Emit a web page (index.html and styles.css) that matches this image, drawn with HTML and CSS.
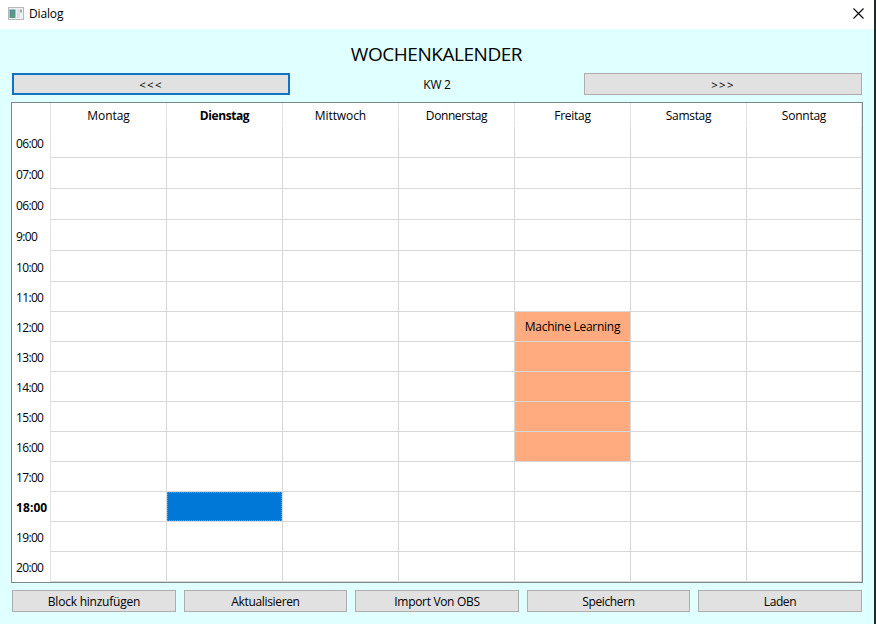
FILE: index.html
```html
<!DOCTYPE html>
<html lang="de">
<head>
<meta charset="utf-8">
<title>Dialog</title>
<link rel="stylesheet" href="styles.css">
</head>
<body>
<div class="window">
  <header class="titlebar">
    <svg class="app-icon" width="16" height="14" viewBox="0 0 16 14">
      <defs><linearGradient id="pane" x1="0" y1="0" x2="1" y2="1"><stop offset="0" stop-color="#4a8a9c"/><stop offset="1" stop-color="#62a47c"/></linearGradient></defs>
      <rect x="0.5" y="0.5" width="15" height="12" fill="#eef0f2" stroke="#b4b9bd"/>
      <rect x="1.5" y="2.5" width="6" height="8.5" fill="url(#pane)"/>
      <rect x="9" y="2.5" width="3" height="8.5" fill="#dfe2e5"/>
      <rect x="12" y="2.5" width="2" height="3" fill="#a3abb4"/>
    </svg>
    <span class="caption"><span class="t" data-w="34">Dialog</span></span>
    <svg class="close" width="11" height="11" viewBox="0 0 11 11"><path d="M0.5 0.5L10.5 10.5M10.5 0.5L0.5 10.5" stroke="#000" stroke-width="1.1" fill="none"/></svg>
  </header>
  <main class="content">
    <h1 class="title"><span class="t" data-w="171">WOCHENKALENDER</span></h1>
    <nav class="week-nav">
      <button class="btn focused"><span class="arrows">&lt;&lt;&lt;</span></button>
      <span class="week"><span class="t" data-w="27">KW 2</span></span>
      <button class="btn"><span class="arrows">&gt;&gt;&gt;</span></button>
    </nav>
    <section class="calendar" id="calendar"></section>
    <footer class="actions">
      <button class="btn"><span class="t" data-w="92">Block hinzufügen</span></button>
      <button class="btn"><span class="t" data-w="68">Aktualisieren</span></button>
      <button class="btn"><span class="t" data-w="85">Import Von OBS</span></button>
      <button class="btn"><span class="t" data-w="52">Speichern</span></button>
      <button class="btn"><span class="t" data-w="32">Laden</span></button>
    </footer>
  </main>
</div>
<script src="script.js"></script>
</body>
</html>
```
FILE: styles.css
```css
* { box-sizing: border-box; }
body {
  margin: 0;
  font: 12px/16px "Open Sans", "Noto Sans", sans-serif;
  color: #000;
}
.window {
  width: 876px;
  height: 624px;
  display: flex;
  flex-direction: column;
  background: #e0ffff;
  border-right: 2px solid #20292c;
  overflow: hidden;
}
.t { white-space: nowrap; }
.titlebar {
  height: 29px;
  flex: none;
  display: flex;
  align-items: center;
  padding: 0 10px 2px 8px;
  background: #fff;
}
.app-icon { display: block; }
.caption { margin: 1px 0 0 5px; flex: 1; }
.close { display: block; }
.content {
  display: flex;
  flex-direction: column;
  padding: 12px 12px 0 11px;
}
.title {
  margin: 0;
  height: 32px;
  font-size: 19px;
  line-height: 26px;
  font-weight: 400;
  text-align: center;
}
.week-nav {
  display: grid;
  grid-template-columns: 278px 1fr 278px;
  height: 22px;
  margin: 0 0 7px 1px;
}
.week { text-align: center; line-height: 24px; }
.btn {
  display: flex;
  align-items: center;
  justify-content: center;
  height: 22px;
  padding: 2px 0 0;
  font: inherit;
  color: inherit;
  background: #e1e1e1;
  border: 1px solid #adadad;
}
.focused { border: 2px solid #0f74c8; }
.arrows { letter-spacing: 1.2px; font-size: 11.5px; }
.calendar {
  width: 852px;
  height: 481px;
  display: grid;
  grid-template-columns: 39px repeat(6, 116px) 115px;
  grid-template-rows: 24px repeat(5, 31px) repeat(10, 30px);
  background: #fff;
  border: 1px solid #7c868c;
}
.day, .hour, .corner, .cell {
  display: flex;
  align-items: center;
  border-right: 1px solid #d8d8d8;
}
.day {
  justify-content: center;
  padding-top: 1px;
  border-right-color: #e4e4e4;
}
.corner, .hour { border-right-color: #e4e4e4; }
.hour { padding: 2px 0 0 4px; }
.cell {
  justify-content: center;
  border-bottom: 1px solid #d8d8d8;
}
.current { font-weight: 700; }
.booked { background: #ffaa7f; background-clip: padding-box; }
.selected { background: #0078d7; background-clip: padding-box; }
.selected::before {
  content: "";
  align-self: stretch;
  flex: 1;
  border: 1px dotted #a8927c;
}
.actions {
  display: grid;
  grid-template-columns: 164px 163px 164px 163px 164px;
  column-gap: 8px;
  margin: 7px 0 0 1px;
}
```
FILE: script.js
```js
const days = [["Montag", 42], ["Dienstag", 49], ["Mittwoch", 51], ["Donnerstag", 61], ["Freitag", 36], ["Samstag", 45], ["Sonntag", 44]];
const hours = ["06:00", "07:00", "06:00", "9:00", "10:00", "11:00", "12:00", "13:00", "14:00", "15:00", "16:00", "17:00", "18:00", "19:00", "20:00"];
const calendar = document.getElementById("calendar");

function add(className, text, width) {
  const box = document.createElement("div");
  box.className = className;
  if (text) {
    const label = document.createElement("span");
    label.className = "t";
    label.dataset.w = width;
    label.textContent = text;
    box.append(label);
  }
  calendar.append(box);
}

add("corner");
days.forEach(([name, width], i) => add(i === 1 ? "day current" : "day", name, width));
hours.forEach((hour, row) => {
  const current = row === 12;
  add(current ? "hour current" : "hour", hour, current ? 31 : hour.length === 4 ? 21 : 27);
  days.forEach((_, col) => {
    const booked = col === 4 && row >= 6 && row <= 10;
    const selected = col === 1 && current;
    add("cell" + (booked ? " booked" : "") + (selected ? " selected" : ""), booked && row === 6 ? "Machine Learning" : "", 95);
  });
});

// Track each label to its nominal width.
document.querySelectorAll(".t").forEach((label) => {
  const gap = Number(label.dataset.w) + 0.3 - label.getBoundingClientRect().width;
  label.style.letterSpacing = gap / label.textContent.length + "px";
});
```
